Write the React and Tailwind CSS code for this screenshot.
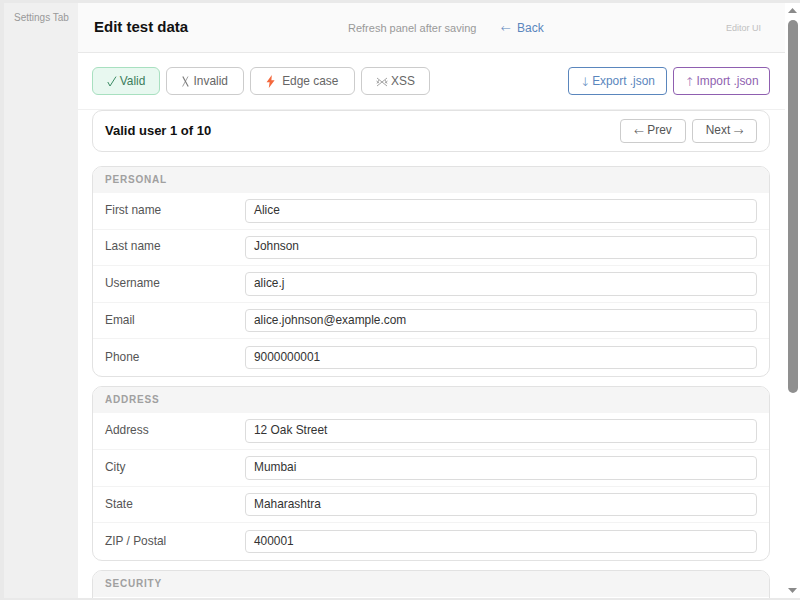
const font = "font-['Liberation_Sans',Arial,sans-serif]";

function Arrow({ c }) {
  return <span className="font-['DejaVu_Sans',sans-serif] text-[12px] font-light">{c}</span>;
}

function Bolt() {
  return (
    <svg width="9" height="13" viewBox="0 0 9 13" className="shrink-0">
      <path d="M5.8 0 L0.6 7.2 H3.6 L2.8 13 L8.6 5.2 H5.4 Z" fill="#f4683c" />
    </svg>
  );
}

function Swords() {
  return (
    <svg width="12" height="10" viewBox="0 0 12 10" className="shrink-0" fill="none" stroke="#a5a5a5" strokeWidth="1">
      <path d="M1 1 L11 9 M11 1 L1 9 M0.5 4 L3 6 M11.5 4 L9 6 M1 6.5 L3 3 M11 6.5 L9 3" />
    </svg>
  );
}

function Check() {
  return (
    <svg width="10" height="11" viewBox="0 0 10 11" className="shrink-0" fill="none" stroke="#3c8a64" strokeWidth="1">
      <path d="M0.8 6 L3 10 L9 0.6" />
    </svg>
  );
}

function Cross() {
  return (
    <svg width="7" height="11" viewBox="0 0 7 11" className="shrink-0" fill="none" stroke="#777">
      <path d="M0.8 0.5 L6.2 10.5" strokeWidth="1.1" />
      <path d="M6 0.5 L0.6 10.5" strokeWidth="0.7" />
    </svg>
  );
}

function Field({ label, value, last }) {
  return (
    <div className={`flex items-center h-[36.6px] px-3 ${last ? "" : "border-b border-[#f3f3f3]"}`}>
      <div className="w-[140px] shrink-0 text-[11.9px] text-[#555]">{label}</div>
      <div className="flex-1 h-[23.6px] flex items-center pl-[8px] border border-[#dcdcdc] rounded-[4px] text-[11.9px] text-[#333] bg-white">{value}</div>
    </div>
  );
}

function Section({ title, fields, tall }) {
  return (
    <div className={`border border-[#e2e2e2] rounded-[10px] overflow-hidden bg-white shrink-0 ${tall ? "min-h-[60px]" : ""}`}>
      <div className="h-[26px] bg-[#f5f5f5] flex items-center px-3 pb-[1px] text-[10px] font-bold tracking-[0.8px] text-[#a0a0a0]">{title}</div>
      {fields.map((f, i) => (
        <Field key={f[0]} label={f[0]} value={f[1]} last={i === fields.length - 1} />
      ))}
    </div>
  );
}

export default function App() {
  return (
    <div className={`${font} w-[800px] h-[600px] overflow-hidden bg-[#e9e9e9] pt-[3px] pb-[2px] pl-[4px] flex`}>
      <div className="w-[74px] shrink-0 bg-[#f0f0f0] pt-[7px] pl-[10px] text-[10px] text-[#999] whitespace-nowrap">Settings Tab</div>
      <div className="flex-1 bg-white flex min-w-0">
        <div className="flex-1 min-w-0 flex flex-col overflow-hidden">
          <div className="h-[50px] shrink-0 bg-[#fafafa] border-b border-[#e8e8e8] flex items-center pl-4 pr-6">
            <div className="text-[15px] font-bold text-[#111] w-[254px]">Edit test data</div>
            <div className="text-[11px] text-[#999] w-[153px] pt-[1px]">Refresh panel after saving</div>
            <div className="text-xs text-[#5a86bd] flex items-center gap-[6px]"><Arrow c="←" />Back</div>
            <div className="ml-auto text-[9px] text-[#c0c0c0] pt-[3px]">Editor UI</div>
          </div>
          <div className="h-[57px] shrink-0 border-b border-[#f0f0f0] flex items-center pl-[14px] pr-[15px] gap-[6px] text-[11.9px]">
            <div className="h-[28px] w-[68px] pt-[1px] flex items-center justify-center gap-[3px] rounded-[6px] border border-[#a8e0c0] bg-[#e8f8f0] text-[#3c7d5c]"><Check />Valid</div>
            <div className="h-[28px] w-[77.5px] pt-[1px] flex items-center justify-center gap-[5px] rounded-[6px] border border-[#ccc] text-[#666]"><Cross />Invalid</div>
            <div className="h-[28px] w-[105.5px] pt-[1px] flex items-center justify-center gap-[7px] rounded-[6px] border border-[#ccc] text-[#666]"><Bolt />Edge case</div>
            <div className="h-[28px] w-[69px] pt-[1px] flex items-center justify-center gap-[3px] rounded-[6px] border border-[#ccc] text-[#666]"><Swords />XSS</div>
            <div className="h-[28px] w-[99px] ml-auto pt-[1px] flex items-center justify-center gap-[2px] rounded-[4px] border border-[#5a86bd] text-[#5a86bd]"><Arrow c="↓" />Export .json</div>
            <div className="h-[28px] w-[97px] pt-[1px] flex items-center justify-center gap-[2px] rounded-[4px] border border-[#8f5fb0] text-[#8f5fb0]"><Arrow c="↑" />Import .json</div>
          </div>
          <div className="pl-[14px] pr-[15px] flex flex-col gap-[14px]">
            <div className="h-[42px] shrink-0 border border-[#e2e2e2] rounded-[10px] flex items-center px-3 gap-[6px] text-[11.9px]">
              <div className="font-bold text-[13px] text-[#111] mr-auto">Valid user 1 of 10</div>
              <div className="h-[24px] w-[66px] flex items-center justify-center gap-[3px] border border-[#ccc] rounded-[4px] text-[#555]"><Arrow c="←" />Prev</div>
              <div className="h-[24px] w-[65px] flex items-center justify-center gap-[3px] border border-[#ccc] rounded-[4px] text-[#555]">Next<Arrow c="→" /></div>
            </div>
            <div className="flex flex-col gap-[9.5px]">
              <Section title="PERSONAL" fields={[["First name","Alice"],["Last name","Johnson"],["Username","alice.j"],["Email","alice.johnson@example.com"],["Phone","9000000001"]]} />
              <Section title="ADDRESS" fields={[["Address","12 Oak Street"],["City","Mumbai"],["State","Maharashtra"],["ZIP / Postal","400001"]]} />
              <Section title="SECURITY" fields={[]} tall />
            </div>
          </div>
        </div>
        <div className="w-[15px] shrink-0 bg-white flex flex-col items-center">
          <svg width="15" height="15" viewBox="0 0 15 15" className="shrink-0"><path d="M3 10 L7.5 5 L12 10 Z" fill="#8a8a8a" /></svg>
          <div className="w-[10px] h-[373px] bg-[#8f8f8f] rounded-[5px] shrink-0 mt-[2px]"></div>
          <svg width="15" height="15" viewBox="0 0 15 15" className="shrink-0 mt-auto"><path d="M3 5 L7.5 10 L12 5 Z" fill="#8a8a8a" /></svg>
        </div>
      </div>
    </div>
  );
}
